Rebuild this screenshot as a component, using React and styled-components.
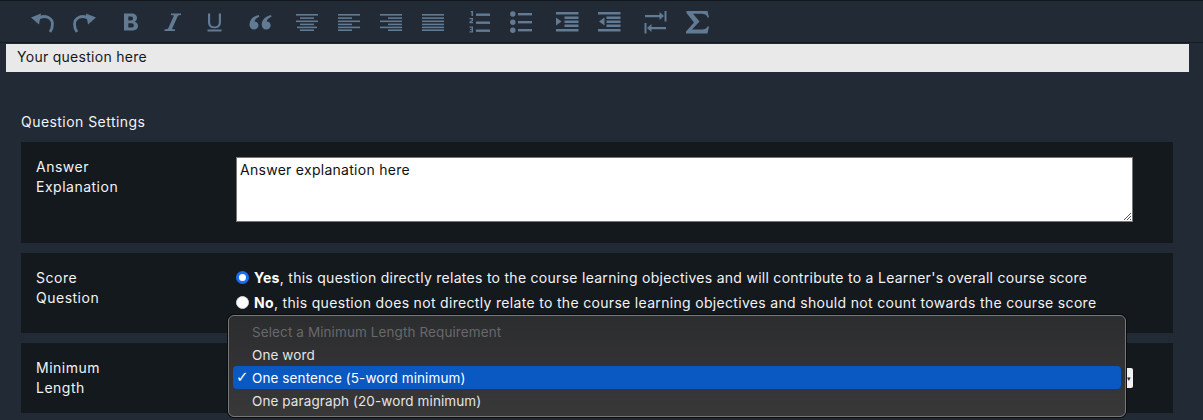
import React from "react";
import styled, { createGlobalStyle } from "styled-components";

const Global = createGlobalStyle`
  html, body { margin: 0; padding: 0; background: #212a35; }
  body { font-family: "Inter", "Liberation Sans", sans-serif; width: 1203px; height: 420px; overflow: hidden; }
`;
const Page = styled.div`
  position: relative; width: 1203px; height: 420px; overflow: hidden; background: #212a35; color: #f2f3f4;
  font-size: 14px; letter-spacing: 0.28px;
`;
const Toolbar = styled.div`
  display: flex; align-items: center; height: 43px; box-sizing: border-box; padding: 1px 0 0 0;
  border-top: 1px solid #12171d; border-bottom: 1px solid #14191f; background: #212a35;
`;
const Icon = styled.svg`
  display: block; flex: none; margin-left: ${p => p.$ml}px; fill: #627b94; stroke: none;
`;
const Arc = styled.path`
  fill: none; stroke: #627b94; stroke-width: 2.8;
`;
const QuestionBar = styled.div`
  margin: 1px 14px 0 6px; height: 28px; box-sizing: border-box; background: #e9e9e9; color: #15181c; padding: 0 0 3px 11px;
  display: flex; align-items: center;
`;
const Heading = styled.h2`
  margin: 41px 0 0 21px; font-size: 14px; line-height: 17px; font-weight: 400; letter-spacing: 0.45px;
`;
const Panel = styled.section`
  margin: 12px 30px 0 21px; height: ${p => p.$h}px; background: #14191e; box-sizing: border-box; padding: 15px 40px 0 15px;
  display: flex; &+&{margin-top:10px;}
`;
const Label = styled.div`
  width: 200px; flex: none; line-height: 20px; letter-spacing: 0.5px;
`;
const Text = styled.div`
  width: 897px; height: 65px; box-sizing: border-box; background: #fff; color: #111; border: 1px solid #767676;
  padding: 3px 3px; line-height: 17px; position: relative;
`;
const Grip = styled.svg`
  position: absolute; right: 0; bottom: 0; stroke: #555; stroke-width: 1;
`;
const Options = styled.div`
  display: flex; flex-direction: column; gap: 7px; margin-top: 0.5px;
`;
const Opt = styled.label`
  display: flex; align-items: center; height: 18px; gap: 5px; white-space: nowrap;
  letter-spacing: ${p => p.$ls}px;
  b { font-weight: 700; color: #fff; }
`;
const Radio = styled.span`
  width: 13px; height: 13px; border-radius: 50%; box-sizing: border-box; flex: none;
  background: #fff; border: ${p => p.$on ? "3px solid #1a6ef5" : "1px solid #d5d5d5"};
`;
const SelectStub = styled.div`
  margin-left: 1px; width: 896px; height: 20px; background: #f2f2f2; margin-top: 10px; display: flex; justify-content: flex-end; align-items: center;
  color: #222; font-size: 7px; padding-right: 2px; box-sizing: border-box; border-radius: 2px;
`;
const Menu = styled.div`
  position: absolute; left: 228px; top: 315px; width: 898px; height: 102px; box-sizing: border-box;
  background: linear-gradient(#2c2d2f, #383839); border: 1px solid #77787a; border-radius: 6px;
  box-shadow: 0 0 0 1px #0c0c0c; padding: 4px; color: #e4e4e4; font-size: 13.5px; letter-spacing: 0.1px;
`;
const Item = styled.div`
  height: 23px; display: flex; align-items: center; padding-left: 19px; border-radius: 4px; position: relative;
  ${p => p.$sel && "background: #0a58c2; color: #fff;"}
  ${p => p.$off && "color: #67686a;"}
`;
const Check = styled.span`
  position: absolute; left: 3px; top: 2px; font-size: 15px; line-height: 18px; font-weight: 700; font-family: "DejaVu Sans", sans-serif;
`;

const Lines = ({ rows, ml = 0 }) => (
  <Icon $ml={ml} width="22" height="18" viewBox="0 0 22 18">
    {rows.map(([x, wd, y, h = 1.6], i) => <rect key={i} x={x} y={y} width={wd} height={h} />)}
  </Icon>
);

const Undo = ({ ml, flip }) => (
  <Icon $ml={ml} width="23" height="21" viewBox="0 0 23 21">
    <g transform={flip ? "matrix(-1 0 0 1 23 0)" : undefined}>
      <path d="M0 5.500L10 1.500L8 12.500Z" />
      <Arc d="M7 6.500C14 2 21.500 6 21.500 12C21.500 15 20.800 17.500 19 20" />
    </g>
  </Icon>
);

const IndentRows = () => (
  <>
    <rect x="0" y="0" width="22.500" height="2.500" /><rect x="8.500" y="4.500" width="14" height="2.500" /><rect x="8.500" y="8.500" width="14" height="2.500" /><rect x="8.500" y="12.500" width="14" height="2.500" /><rect x="0" y="17" width="22.500" height="2.500" />
  </>
);

export default function App() {
  return (
    <Page>
      <Global />
      <Toolbar>
        <Undo ml={31} />
        <Undo ml={19} flip />
        <Icon $ml={27} width="16" height="20" viewBox="0 0 16 19"><path fillRule="evenodd" d="M1 1H8.500C12 1 14 3 14 5.500C14 7.500 13 8.600 11.500 9.200C13.700 9.800 15 11.200 15 13.500C15 16.500 12.500 18 9 18H1ZM5.300 4V8H8C9.300 8 10 7.300 10 6C10 4.700 9.300 4 8 4ZM5.300 10.800V15H8.500C10 15 10.800 14.200 10.800 12.900C10.800 11.600 10 10.800 8.500 10.800Z" /></Icon>
        <Icon $ml={25} width="17" height="20" viewBox="0 0 17 19"><path d="M7 1H17V2.500L14 3L8 16.500L11 17V18.500H0.500V17L4 16.300L10 3L7 2.500Z" /></Icon>
        <Icon $ml={26} width="15" height="20" viewBox="0 0 15 19"><path d="M1 1H3.200V10C3.200 12.500 4.800 14 7.500 14C10.200 14 11.800 12.500 11.800 10V1H14V10C14 13.700 11.300 15.800 7.500 15.800C3.700 15.800 1 13.700 1 10ZM0.500 17H14.500V19H0.500Z" /></Icon>
        <Icon $ml={27} width="23" height="16" viewBox="0 0 23 16"><path d="M9.800 1C5 2 1 5 0.500 10C0.300 13.300 2 15.500 5 15.500C7.500 15.500 9.500 13.800 9.500 11.300C9.500 9 7.500 7.500 5.500 7.500C6 5.500 7.500 4 10.300 2.800ZM22 1C17.200 2 13.200 5 12.700 10C12.500 13.300 14.200 15.500 17.200 15.500C19.700 15.500 21.700 13.800 21.700 11.300C21.700 9 19.700 7.500 17.700 7.500C18.200 5.500 19.700 4 22.500 2.800Z" /></Icon>
        <Lines ml={24} rows={[[0,22,1],[4,14,4.300],[0,22,7.500],[4,14,10.600],[1,20,13.600],[4,14,16.400]]} />
        <Lines ml={20} rows={[[0,22,1],[0,14,4.300],[0,22,7.500],[0,14,10.600],[0,22,13.600],[0,14,16.400]]} />
        <Lines ml={20} rows={[[0,22,1],[8,14,4.300],[0,22,7.500],[8,14,10.600],[0,22,13.600],[8,14,16.400]]} />
        <Lines ml={20} rows={[[0,22,1],[0,22,4.300],[0,22,7.500],[0,22,10.600],[0,22,13.600],[0,22,16.400]]} />
        <Icon $ml={25} width="22" height="22" viewBox="0 0 22 22">
          <rect x="7" y="2.500" width="14" height="2.400" /><rect x="7" y="10.500" width="14" height="2.400" /><rect x="7" y="18.500" width="14" height="2.400" />
          <path d="M2 0H4V5H2.500V1.300H1.500ZM0.500 7H4V10L2 11H4V12.300H0.500V10.500L2.700 9.300V8.300H0.500ZM0.500 15.500H4V21.500H0.500V20.300H2.700V19.100H1V18H2.700V16.700H0.500Z" />
        </Icon>
        <Icon $ml={19} width="22" height="22" viewBox="0 0 22 22">
          <circle cx="2.800" cy="3" r="2.700" /><circle cx="2.800" cy="11.300" r="2.700" /><circle cx="2.800" cy="19.300" r="2.700" />
          <rect x="8" y="2" width="14" height="2.400" /><rect x="8" y="10" width="14" height="2.400" /><rect x="8" y="18" width="14" height="2.400" />
        </Icon>
        <Icon $ml={24} width="23" height="20" viewBox="0 0 23 20">
          <IndentRows />
          <path d="M0 5.500L5.500 9.500L0 13.500Z" />
        </Icon>
        <Icon $ml={19} width="23" height="20" viewBox="0 0 23 20">
          <IndentRows />
          <path d="M6.500 5.500L1 9.500L6.500 13.500Z" />
        </Icon>
        <Icon $ml={23} width="23" height="23" viewBox="0 0 23 23">
          <path d="M1 4H15.500V1L20 5L15.500 9V6.300H1ZM20.500 0H22.500V10.500H20.500Z" />
          <path d="M22 16H7.500V13L3 17L7.500 21V18.300H22ZM0.500 12H2.500V22.500H0.500Z" />
        </Icon>
        <Icon $ml={19} width="23" height="23" viewBox="0 0 23 23"><path d="M0.500 0H21.500L23 6.500H21.500C20.500 3.500 18.500 2.800 15 2.800H7L13.500 10.500L6 18.500H16C19 18.500 20.500 17.500 21.500 15.500H23L21.500 22.500H0V20.500L8 11.500L0.500 2Z" /></Icon>
      </Toolbar>
      <QuestionBar>Your question here</QuestionBar>
      <Heading>Question Settings</Heading>
      <Panel $h={101}>
        <Label>Answer<br />Explanation</Label>
        <Text>Answer explanation here
          <Grip width="9" height="9" viewBox="0 0 9 9"><path d="M1 8L8 1M4 8L8 4M7 8L8 7" /></Grip>
        </Text>
      </Panel>
      <Panel $h={80}>
        <Label>Score<br />Question</Label>
        <Options>
          <Opt $ls={0.28}><Radio $on /> <span><b>Yes</b>, this question directly relates to the course learning objectives and will contribute to a Learner's overall course score</span></Opt>
          <Opt $ls={0.32}><Radio /> <span><b>No</b>, this question does not directly relate to the course learning objectives and should not count towards the course score</span></Opt>
        </Options>
      </Panel>
      <Panel $h={70}>
        <Label>Minimum<br />Length</Label>
        <SelectStub>▾</SelectStub>
      </Panel>
      <Menu>
        <Item $off>Select a Minimum Length Requirement</Item>
        <Item>One word</Item>
        <Item $sel><Check>✓</Check>One sentence (5-word minimum)</Item>
        <Item>One paragraph (20-word minimum)</Item>
      </Menu>
    </Page>
  );
}
